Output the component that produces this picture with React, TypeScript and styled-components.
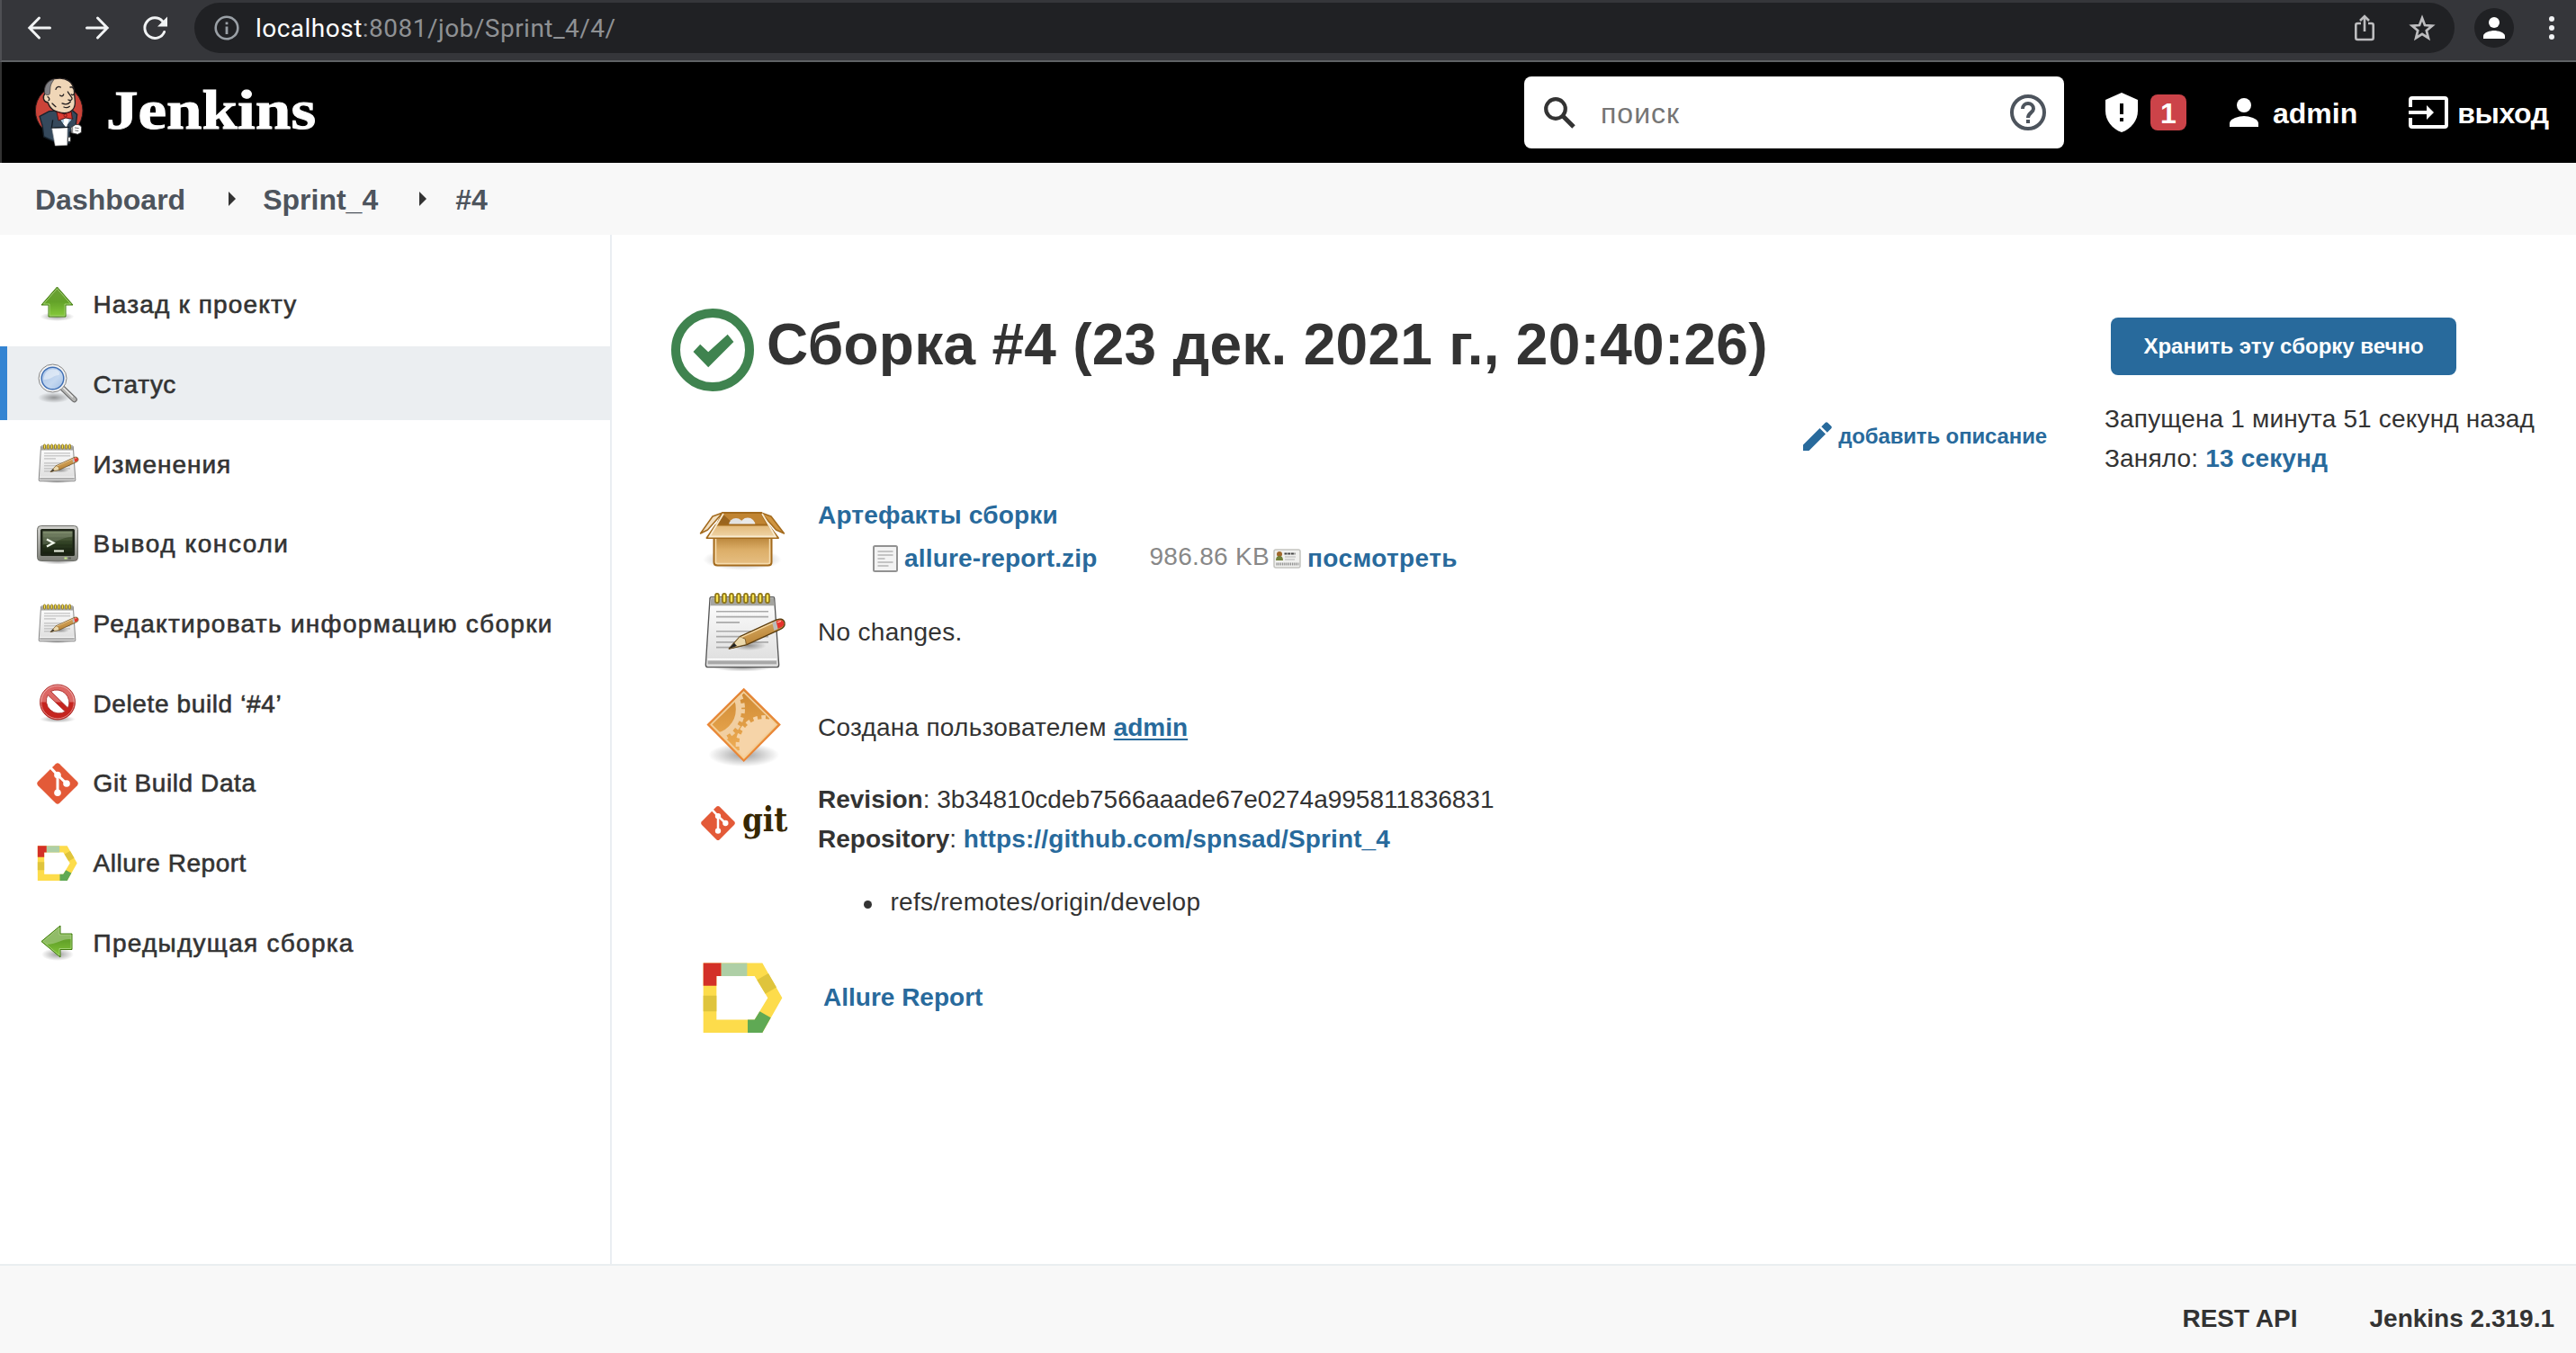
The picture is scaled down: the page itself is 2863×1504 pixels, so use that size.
import React from "react";
import styled, { createGlobalStyle } from "styled-components";

const GlobalStyle = createGlobalStyle`
  *, *::before, *::after { box-sizing: border-box; }
  body {
    margin: 0;
    background: #fff;
    color: #333;
    font-family: "Liberation Sans", Arial, sans-serif;
    font-size: 28px;
  }
  svg { display: block; flex: none; overflow: visible; }
`;

const Page = styled.div`
  display: flex;
  flex-direction: column;
  width: 2863px;
  height: 1504px;
  overflow: hidden;
  white-space: nowrap;
`;

/* ---------- browser toolbar ---------- */

const Toolbar = styled.div`
  display: flex;
  align-items: flex-start;
  height: 69px;
  background: #35363a;
  border-bottom: 2px solid #5f6164;
  border-left: 2px solid #4e4f53;
`;

const NavButtons = styled.div`
  display: flex;
  align-items: center;
  gap: 38px;
  height: 62px;
  padding-left: 29px;
  width: 214px;
`;

const AddressBar = styled.div`
  display: flex;
  align-items: center;
  width: 2512px;
  height: 56px;
  margin-top: 3px;
  padding: 0 21px 0 22px;
  border-radius: 28px;
  background: #202124;
`;

const Url = styled.div`
  flex: 1;
  margin-left: 18px;
  font-family: Roboto, sans-serif;
  font-size: 28px;
  line-height: 57px;
  letter-spacing: 0.48px;
  color: #8f9194;
  span { color: #fff; }
`;

const AddressActions = styled.div`
  display: flex;
  align-items: center;
  gap: 38px;
`;

const Avatar = styled.div`
  display: flex;
  align-items: center;
  justify-content: center;
  width: 44px;
  height: 44px;
  margin: 9px 0 0 22px;
  border-radius: 50%;
  background: #202124;
`;

const MenuDots = styled.div`
  display: flex;
  flex-direction: column;
  gap: 4px;
  margin: 18px 0 0 39px;
  i { width: 6px; height: 6px; border-radius: 50%; background: #f1f3f4; }
`;

/* ---------- Jenkins header ---------- */

const Header = styled.header`
  display: flex;
  align-items: center;
  height: 112px;
  padding-left: 36px;
  background: #000;
  border-left: 2px solid #333;
  color: #fff;
`;

const Brand = styled.div`
  display: flex;
  align-items: center;
  width: 1656px;
`;

const BrandName = styled.div`
  margin-left: 25px;
  padding-bottom: 5px;
  font-family: "Liberation Serif", serif;
  font-weight: 700;
  font-size: 61px;
  line-height: 80px;
  -webkit-text-stroke: 1px #fff;
  transform: scaleX(1.165);
  transform-origin: left center;
`;

const SearchBox = styled.div`
  display: flex;
  align-items: center;
  width: 600px;
  height: 80px;
  padding: 0 20px 0 22px;
  border-radius: 8px;
  background: #fff;
`;

const Placeholder = styled.span`
  flex: 1;
  padding: 2px 0 0 28px;
  font-size: 32px;
  letter-spacing: 1px;
  color: #757575;
`;

const HeaderLink = styled.div<{ $left: number; $gap: number; $ls?: number }>`
  display: flex;
  align-items: center;
  gap: ${(p) => p.$gap}px;
  margin-left: ${(p) => p.$left}px;
  font-weight: 700;
  font-size: 32px;
  line-height: 40px;
  letter-spacing: ${(p) => p.$ls ?? 0}px;
  span { padding-top: 2px; }
`;

const Badge = styled.div`
  width: 40px;
  height: 40px;
  border-radius: 8px;
  background: #cc4349;
  text-align: center;
  line-height: 42px;
`;

/* ---------- breadcrumbs ---------- */

const Breadcrumbs = styled.nav`
  display: flex;
  align-items: center;
  height: 80px;
  padding-left: 39px;
  background: #f8f8f8;
  color: #4d545d;
  font-weight: 700;
  font-size: 32px;
  line-height: 40px;
  span { padding-top: 2px; }
`;

const Separator = styled.i<{ $before: number; $after: number }>`
  margin: 0 ${(p) => p.$after}px 0 ${(p) => p.$before}px;
  border: 8px solid transparent;
  border-left-color: #333;
  border-right-width: 0;
`;

/* ---------- body ---------- */

const Body = styled.div`
  display: flex;
  height: 1144px;
`;

const Sidebar = styled.aside`
  display: flex;
  flex-direction: column;
  gap: 6.7px;
  width: 680px;
  padding-top: 35.3px;
  border-right: 2px solid #eaeef2;
`;

const Task = styled.a<{ $active?: boolean; $ls?: number }>`
  display: flex;
  align-items: center;
  height: 82px;
  padding-left: ${(p) => (p.$active ? 32 : 40)}px;
  border-left: ${(p) => (p.$active ? "8px solid #3484d2" : "none")};
  background: ${(p) => (p.$active ? "#ebeef1" : "transparent")};
  letter-spacing: ${(p) => p.$ls ?? 0}px;
  -webkit-text-stroke: 0.6px #333;
  svg { margin: 3px 15.5px 0 0; }
  span { padding-top: 4px; }
`;

const Main = styled.main`
  width: 1659px;
  padding-left: 66px;
`;

const Title = styled.h1`
  display: flex;
  align-items: center;
  height: 92px;
  margin: 82px 0 0;
  font-size: 64px;
  line-height: 80px;
  font-weight: 700;
  letter-spacing: 0.27px;
  span { margin: -12px 0 0 14px; }
`;

const AddDescription = styled.div`
  display: flex;
  align-items: center;
  justify-content: flex-end;
  gap: 7px;
  height: 40px;
  margin-top: 30px;
  padding-right: 64px;
  color: #286a9c;
  font-size: 24px;
  font-weight: 700;
  letter-spacing: -0.14px;
`;

const Summary = styled.div`
  display: flex;
  flex-direction: column;
  padding: 55px 0 0 32px;
`;

const SummaryRow = styled.div<{ $height: number; $text?: number }>`
  display: grid;
  grid-template-columns: 96px 1fr;
  column-gap: 35px;
  height: ${(p) => p.$height}px;
  line-height: 44px;
  > div:last-child { padding-top: ${(p) => p.$text ?? 0}px; }
`;

const Link = styled.a<{ $underline?: boolean; $ls?: number }>`
  color: #286a9c;
  font-weight: 700;
  letter-spacing: ${(p) => p.$ls ?? 0}px;
  text-decoration: ${(p) => (p.$underline ? "underline" : "none")};
  text-decoration-thickness: 2px;
  text-underline-offset: 3px;
`;

const Spaced = styled.span<{ $ls: number }>`
  letter-spacing: ${(p) => p.$ls}px;
`;

const Artifacts = styled.div`
  margin-top: -9px;
`;

const ArtifactLine = styled.div`
  display: flex;
  align-items: center;
  height: 48px;
  margin-top: 2px;
  padding-left: 61px;
`;

const FileSize = styled.span`
  margin: -4px 4px 0 58px;
  color: #888;
  letter-spacing: 0.3px;
`;

const Indented = styled.div<{ $left: number }>`
  margin-left: ${(p) => p.$left}px;
`;

const Refs = styled.ul`
  display: flex;
  align-items: center;
  gap: 20.5px;
  margin: 26px 0 0;
  padding: 0 0 0 51px;
  list-style: none;
  letter-spacing: 0.26px;
  &::before { content: ""; width: 9px; height: 9px; margin-top: 4px; border-radius: 50%; background: #333; }
`;

const GitLogo = styled.div`
  display: flex;
  align-items: center;
  height: 96px;
  gap: 7px;
`;

const GitWord = styled.span`
  margin-top: -9px;
  font-family: "DejaVu Serif", serif;
  font-weight: 700;
  font-size: 38px;
  color: #362701;
  transform: scaleX(0.86);
  transform-origin: left center;
`;

const BuildInfo = styled.section`
  width: 524px;
  padding-top: 92px;
`;

const KeepButton = styled.button`
  display: block;
  width: 384px;
  height: 64px;
  margin: 0 0 27px 7px;
  padding: 0 0 1px;
  border: 0;
  border-radius: 8px;
  background: #286a9c;
  color: #fff;
  font: 700 24px "Liberation Sans", Arial, sans-serif;
`;

const InfoLine = styled.div`
  line-height: 44px;
  letter-spacing: 0.17px;
`;

const Footer = styled.footer`
  display: flex;
  justify-content: flex-end;
  gap: 80px;
  height: 99px;
  padding: 21px 24px 0 0;
  border-top: 2px solid #eaeef0;
  background: #f8f8f8;
  font-weight: 700;
  line-height: 76px;
`;

/* ---------- icons ---------- */

const BackIcon = () => (
  <svg width="26" height="26" viewBox="0 0 26 26" fill="none" stroke="#f1f3f4" strokeWidth="3" strokeLinecap="round">
    <path d="M24.5 13H2M12.5 2 1.8 13l10.7 11" />
  </svg>
);
const ForwardIcon = () => (
  <svg width="26" height="26" viewBox="0 0 26 26" fill="none" stroke="#f1f3f4" strokeWidth="3" strokeLinecap="round">
    <path d="M1.5 13H24M13.5 2l10.7 11-10.7 11" />
  </svg>
);
const ReloadIcon = () => (
  <svg width="27" height="27" viewBox="0 0 27 27" fill="none">
    <path d="M23.6 17.5A11.3 11.3 0 1 1 21.5 5.5" stroke="#f1f3f4" strokeWidth="3" strokeLinecap="round" />
    <path d="M27 .5v11H16z" fill="#f1f3f4" />
  </svg>
);
const InfoIcon = () => (
  <svg width="28" height="28" viewBox="0 0 28 28">
    <circle cx="14" cy="14" r="12.3" fill="none" stroke="#9aa0a6" strokeWidth="2.6" />
    <path d="M12.6 12.5h2.8V21h-2.8zM12.6 7.5h2.8v2.8h-2.8z" fill="#9aa0a6" />
  </svg>
);
const ShareIcon = () => (
  <svg width="22" height="30" viewBox="0 0 22 30" fill="none" stroke="#bdbdbf" strokeWidth="2.6">
    <path d="M7 10H3.3a2 2 0 0 0-2 2v14a2 2 0 0 0 2 2h15.4a2 2 0 0 0 2-2V12a2 2 0 0 0-2-2H15M11 19V2.500M6 7l5-5 5 5" />
  </svg>
);
const StarIcon = () => (
  <svg width="30" height="30" viewBox="0 0 30 30" fill="none" stroke="#bdbdbf" strokeWidth="2.7">
    <path d="m15 4 3 8 8.200.6-6.400 5.300 2.100 8.300-6.900-4.400-6.900 4.400 2.100-8.300L3.800 12.600 12 12z" />
  </svg>
);
const PersonIcon = ({ size, color = "#fff" }: { size: number; color?: string }) => (
  <svg width={size} height={size} viewBox="0 0 32 32" fill={color}>
    <circle cx="16" cy="8" r="8" />
    <path d="M0 32v-4c0-5.300 10.700-8 16-8s16 2.700 16 8v4z" />
  </svg>
);

const Mascot = () => (
  <svg width="55" height="77.300" viewBox="115 258 165 232">
    <ellipse cx="198" cy="369" rx="79" ry="83" fill="#cb4339" stroke="#2a1a1a" strokeWidth="3" />
    <path d="m133 388 32-17 75-5 18 16-5 42-20 18v35h-40l-46-21-4-34z" fill="#35495c" stroke="#16212b" strokeWidth="4" />
    <path d="M151 312c-6-31 15-49 40-50 32-4 53 11 57 39l3 36c2 22-9 39-35 40-29-1-49-14-55-35-15-2-20-18-10-30z" fill="#f0d6b7" stroke="#241f20" strokeWidth="4" />
    <path d="M150 312c-4-25 11-44 31-47-6 10-10 14-12 25l-2 23c-2 5-12 6-17-1z" fill="#808084" stroke="#3a3536" strokeWidth="2" />
    <path d="M187 298c2-8 10-11 16-7M235 291c6-2 9 1 11 5M201 318c5 4 10 3 12-3M239 315c4 3 7 2 9-2M227 306c6 12 20 22 12 27-4 2-7 2-10 0M208 345c12 5 22 2 28-6M214 357c8 4 14 2 19-2M163 335c5-2 2-10-3-12M175 345l12 11" fill="none" stroke="#241f20" strokeWidth="4" strokeLinecap="round" />
    <path d="m197 395 22 30 26-30-25-6z" fill="#abc9dd" stroke="#203040" strokeWidth="3" />
    <path d="m216 393-4 20 11 12 8-27z" fill="#fff" />
    <path d="m190 373 25 7 24-7 3 24-22-4-24 9z" fill="#dc3b32" stroke="#511" strokeWidth="3" />
    <circle cx="219" cy="385" r="5" fill="#dc3b32" stroke="#511" strokeWidth="2" />
    <path d="M174 425c16 3 35 3 52-1l-1 60-40 2z" fill="#fff" stroke="#bbb" strokeWidth="2" />
    <path d="M177 400l-4 26 60-2" fill="none" stroke="#101b24" strokeWidth="4" />
    <path d="M238 425l14-9c10-2 19 1 21 9l-1 17-12 6-21-5zM228 457h8v15h-9z" fill="#fff" stroke="#333" strokeWidth="2.500" />
    <path d="M250 426l14 2M251 435l12 2M243 423v20" stroke="#555" strokeWidth="2.500" />
  </svg>
);

const SearchIcon = () => (
  <svg width="35" height="35" viewBox="0 0 35 35" fill="none" stroke="#333">
    <circle cx="13" cy="13" r="10.800" strokeWidth="4.200" />
    <path d="m21 21 12 12" strokeWidth="5" />
  </svg>
);
const HelpIcon = () => (
  <svg width="40" height="40" viewBox="0 0 40 40" fill="none" stroke="#4d545d" strokeWidth="4">
    <circle cx="20" cy="20" r="18" />
    <path d="M14 16a6 6 0 1 1 12 0c0 4-6 4.500-6 10" />
    <path d="M20 28v4" />
  </svg>
);
const ShieldIcon = () => (
  <svg width="36" height="44" viewBox="0 0 36 44">
    <path d="M18 0l18 8v12c0 11-7.500 20.500-18 24C7.500 40.500 0 31 0 20V8z" fill="#fff" />
    <path d="M16 12h4v12h-4zM16 28h4v4h-4z" fill="#000" />
  </svg>
);
const LogoutIcon = () => (
  <svg width="44" height="36" viewBox="0 0 44 36" fill="#fff">
    <path d="M2 12V4a2 2 0 0 1 2-2h36a2 2 0 0 1 2 2v28a2 2 0 0 1-2 2H4a2 2 0 0 1-2-2v-8" fill="none" stroke="#fff" strokeWidth="4" />
    <path d="M0 16h20v-6l8 8-8 8v-6H0z" />
  </svg>
);

const ArrowUpIcon = () => (
  <svg width="48" height="48" viewBox="0 0 48 48">
    <defs>
      <linearGradient id="green" x1="0" y1="0" x2="0" y2="1">
        <stop offset="0" stopColor="#6c9f38" /><stop offset=".5" stopColor="#64a329" /><stop offset="1" stopColor="#86ca3b" />
      </linearGradient>
      <radialGradient id="shade"><stop offset="0" stopColor="#000" stopOpacity=".38" /><stop offset="1" stopColor="#000" stopOpacity="0" /></radialGradient>
    </defs>
    <ellipse cx="23.500" cy="37" rx="19" ry="5" fill="url(#shade)" />
    <path d="M23.500 4 41 24h-8v13H14V24H6z" fill="url(#green)" stroke="#3f7a0c" strokeLinejoin="round" />
    <path d="M23.500 5.800 38.600 23H32v13H15V23H8.400z" fill="none" stroke="#b5dc8b" strokeOpacity=".7" />
  </svg>
);
const ArrowLeftIcon = () => (
  <svg width="48" height="48" viewBox="0 0 48 48">
    <ellipse cx="24" cy="37" rx="18" ry="7" fill="url(#shade)" />
    <path d="M6 22.500 27 5v9h13v17.500H27V40z" fill="url(#green)" stroke="#3f7a0c" strokeLinejoin="round" />
    <path d="M7.600 22.500 26 7v8h13v5c-10-1-14 5-27 6z" fill="#fff" fillOpacity=".28" />
    <path d="M7.600 22.500 26 7v8h13v15.500H26V38z" fill="none" stroke="#b5dc8b" strokeOpacity=".7" />
  </svg>
);
const MagnifierIcon = () => (
  <svg width="48" height="48" viewBox="0 0 48 48">
    <defs>
      <linearGradient id="lens" x1="0" y1="0" x2="1" y2="1"><stop offset="0" stopColor="#a9c3e6" /><stop offset=".6" stopColor="#c5d8f0" /><stop offset="1" stopColor="#9fbde4" /></linearGradient>
    </defs>
    <ellipse cx="20" cy="39" rx="18" ry="6" fill="url(#shade)" />
    <path d="m29 28 13.500 13" stroke="#666" strokeWidth="6.500" strokeLinecap="round" />
    <path d="m29 28 13.500 13" stroke="#b4b4b2" strokeWidth="4.500" strokeLinecap="round" />
    <path d="m30 27.500 11 11" stroke="#eee" strokeWidth="1.200" />
    <circle cx="18.500" cy="17.500" r="15.500" fill="#f4f4f4" stroke="#858585" />
    <circle cx="18.500" cy="17.500" r="12.300" fill="url(#lens)" stroke="#3f6fb5" strokeWidth="1.500" />
    <path d="M8.500 19c1-9 6-13 14-11 4 2 4 4 3 6-6 0-8 5-17 5z" fill="#fff" fillOpacity=".45" />
  </svg>
);
const NotepadIcon = ({ size }: { size: number }) => (
  <svg width={size} height={size} viewBox="84 47 288 279" preserveAspectRatio="none">
    <defs>
      <linearGradient id="paper" x1="0" y1="0" x2="0" y2="1"><stop offset="0" stopColor="#fff" /><stop offset="1" stopColor="#dcdcdc" /></linearGradient>
      <linearGradient id="wood" x1="0" y1="0" x2=".5" y2="1"><stop offset="0" stopColor="#e6bd78" /><stop offset="1" stopColor="#b27a2b" /></linearGradient>
    </defs>
    <ellipse cx="226" cy="297" rx="100" ry="13" fill="url(#shade)" />
    <path d="M122 69h206q4 0 4 4l15 215q0 8-7 8H110q-7 0-7-8l14-213q0-6 5-6z" fill="url(#paper)" stroke="#555" strokeWidth="4" />
    <path d="M121 72h209l2 25H118z" fill="#a5a5a0" />
    <path d="M110 275h229v11H110z" fill="#a8a8a8" />
    <path d="M109 270h231" stroke="#fff" strokeWidth="4" />
    <path d="M138 116h174M138 133h174M138 151h78M138 180h174M138 197h174M138 215h174M138 232h60" stroke="#aaa" strokeWidth="5" />
    <ellipse cx="245" cy="226" rx="60" ry="16" fill="url(#shade)" />
    {[141, 165, 189, 213, 237, 261, 285, 309].map((x) => (
      <rect key={x} x={x - 6} y="58" width="12" height="30" rx="6" fill="#f7e251" stroke="#8d7416" strokeWidth="5" />
    ))}
    <path d="m181 236 36-39 117-52c14-8 29-6 32 7 2 12-5 18-15 22L240 223z" fill="url(#wood)" stroke="#5a3d10" strokeWidth="4" strokeLinejoin="round" />
    <path d="m181 236 36-39 18 8 3 18z" fill="#ecd9ac" stroke="#5a3d10" strokeWidth="2" />
    <path d="m181 236 17-18 9 9z" fill="#222" />
    <path d="m222 199 105-46" stroke="#f6d9a4" strokeWidth="4" />
    <path d="m325 152 13-6 6 26-13 6z" fill="#bcbcbc" />
    <path d="m338 147c14-6 24-3 26 7 0 9-6 13-20 17z" fill="#e7322d" />
    <path d="m342 151 12-4" stroke="#ffb0a0" strokeWidth="4" />
  </svg>
);
const TerminalIcon = () => (
  <svg width="48" height="48" viewBox="0 0 48 48">
    <defs>
      <linearGradient id="screen" x1="0" y1="0" x2="0" y2="1"><stop offset="0" stopColor="#6b7b56" /><stop offset=".55" stopColor="#2f3f22" /><stop offset="1" stopColor="#172010" /></linearGradient>
      <linearGradient id="shell" x1="0" y1="0" x2="0" y2="1"><stop offset="0" stopColor="#cfcfcb" /><stop offset="1" stopColor="#7d7f78" /></linearGradient>
    </defs>
    <ellipse cx="24" cy="43" rx="20" ry="3.500" fill="url(#shade)" />
    <rect x="1.500" y="3.500" width="45" height="39" rx="4" fill="url(#shell)" stroke="#6d6e69" />
    <rect x="5" y="7" width="38" height="30" rx="1.500" fill="#1d2417" />
    <rect x="7.500" y="9.500" width="33" height="25" fill="url(#screen)" />
    <path d="M8 13h32M8 17h32M8 21h32M8 25h32M8 29h32" stroke="#000" strokeOpacity=".14" />
    <path d="M7.500 9.500h33v6c-14 1-18 8-33 9z" fill="#fff" fillOpacity=".14" />
    <path d="m12 18.500 7.500 4-7.500 4" fill="none" stroke="#f0f6ea" strokeWidth="2.300" />
    <path d="M20 31.500h11" stroke="#e2e8da" strokeWidth="2.200" />
    <path d="M31.500 39.500h3" stroke="#c9ee86" strokeWidth="2" />
    <path d="M36 39.500h3" stroke="#5d5f57" strokeWidth="2" />
  </svg>
);
const DeleteIcon = () => (
  <svg width="48" height="48" viewBox="0 0 48 48" fill="none">
    <defs>
      <linearGradient id="ban" x1="0" y1="0" x2="0" y2="1"><stop offset="0" stopColor="#dd6462" /><stop offset=".48" stopColor="#dc6a66" /><stop offset=".52" stopColor="#c5241f" /><stop offset="1" stopColor="#c5241f" /></linearGradient>
    </defs>
    <ellipse cx="24" cy="41.500" rx="20" ry="4" fill="url(#shade)" />
    <path fillRule="evenodd" d="M24 3a19.500 19.500 0 1 0 0 39 19.500 19.500 0 0 0 0-39zm-11 11.500 19.500 18.500A14 14 0 0 1 13 14.500zm3.500-4A14 14 0 0 1 35.500 29z" fill="url(#ban)" stroke="#a5201c" strokeWidth=".8" />
    <circle cx="24" cy="22.500" r="18.300" stroke="#fff" strokeOpacity=".45" />
  </svg>
);
const GitIcon = ({ size }: { size: number }) => (
  <svg width={size} height={size} viewBox="0 0 48 48">
    <path d="M21.800 2.200q2.200-2 4.400 0l19.600 19.600q2 2.200 0 4.400L26.200 45.800q-2.200 2-4.400 0L2.200 26.200q-2-2.200 0-4.400z" fill="#e35a38" />
    <path d="M15 5 24 14.500v19.500M24 14.500l10 9.500" fill="none" stroke="#fff" strokeWidth="3" />
    <circle cx="24" cy="14.500" r="3.800" fill="#fff" />
    <circle cx="34" cy="24" r="3.800" fill="#fff" />
    <circle cx="24" cy="34.300" r="3.800" fill="#fff" />
  </svg>
);
const AllureIcon = ({ size }: { size: number }) => (
  <svg width={size} height={size} viewBox="84 1224 288 279" preserveAspectRatio="none">
    <path fillRule="evenodd" d="M95 1249h197l66 112-66 113H95zM139 1291v141h127l44-71-44-70z" fill="#fddc4b" />
    <path d="M95 1249h60v42h-16v31H95z" fill="#d33027" />
    <path d="M155 1249h86v42h-86z" fill="#aecfa6" />
    <path d="M95 1354h44v51H95zM274 1303l38-21 27 45-37 21z" fill="#dfc43c" />
    <path d="M243 1432h23l17-27 37 20-28 49h-49z" fill="#5fa954" />
  </svg>
);
const SuccessIcon = () => (
  <svg width="92" height="92" viewBox="0 0 92 92" fill="#3f834f">
    <circle cx="46" cy="46" r="41" fill="none" stroke="#3f834f" strokeWidth="10" />
    <path d="m24.500 48 7.700-8.300 9 8.600 21.500-19.600 6.700 8.300L41.200 65.300z" />
  </svg>
);
const PencilIcon = () => (
  <svg width="32" height="32" viewBox="0 0 32 32" fill="#286a9c">
    <path d="M0 25.500 18.500 7 25 13.500 6.500 32H0zM20.300 5.200l4.500-4.500q1.200-1 2.400 0l4.100 4.100q1 1.200 0 2.400l-4.500 4.500z" />
  </svg>
);
const PackageIcon = () => (
  <svg width="96" height="96" viewBox="0 0 96 96">
    <defs>
      <linearGradient id="carton" x1="0" y1="0" x2="0" y2="1"><stop offset="0" stopColor="#b98439" /><stop offset=".45" stopColor="#dcae68" /><stop offset="1" stopColor="#e7c084" /></linearGradient>
      <linearGradient id="flap" x1="0" y1="0" x2="0" y2="1"><stop offset="0" stopColor="#e2b878" /><stop offset="1" stopColor="#f1d7aa" /></linearGradient>
    </defs>
    <ellipse cx="47" cy="62" rx="44" ry="12" fill="url(#shade)" />
    <path d="M25 10 14 14 .5 33l8-4L19 17z" fill="#f2dfc0" stroke="#a36a1d" strokeWidth="1.500" strokeLinejoin="round" />
    <path d="M68 10l11 4 14.500 19-9-4L74 17z" fill="#cf9440" stroke="#a36a1d" strokeWidth="1.500" strokeLinejoin="round" />
    <path d="M25 10h43l8 15H18z" fill="#c08432" stroke="#a36a1d" strokeWidth="2" />
    <path d="m26 12-6 11h18z" fill="#9a641d" />
    <circle cx="40" cy="24" r="8" fill="#e2e2e2" /><circle cx="53" cy="24" r="8.500" fill="#e9e9e9" />
    <path d="M15.500 37h64v28q0 3.500-4 3.500h-56q-4 0-4-3.500z" fill="url(#carton)" stroke="#a36a1d" strokeWidth="2" />
    <path d="M17.500 39v26q0 1.500 2 1.500h56q2 0 2-1.500V39" fill="none" stroke="#f5dcae" strokeWidth="1.500" />
    <path d="M17.500 23.500h58.500l11 14.500H7.500z" fill="url(#flap)" stroke="#a36a1d" strokeWidth="2" strokeLinejoin="round" />
    <path d="M26 11 10.500 36.500h73.500L69 11" fill="none" stroke="#f9ebd0" strokeWidth="1.800" />
  </svg>
);
const UserCauseIcon = () => (
  <svg width="96" height="96" viewBox="84 348 288 279" preserveAspectRatio="none">
    <defs>
      <linearGradient id="amber" x1="0" y1="0" x2="0" y2="1"><stop offset="0" stopColor="#cd8832" /><stop offset="1" stopColor="#f4b35a" /></linearGradient>
      <clipPath id="tile"><path d="M230 372 341 480 230 590 118 480z" /></clipPath>
    </defs>
    <ellipse cx="230" cy="578" rx="118" ry="38" fill="url(#shade)" />
    <path d="M230 365 350 480 230 597 110 480z" fill="url(#amber)" stroke="#ea8435" strokeWidth="5" />
    <g clipPath="url(#tile)">
      <circle cx="125" cy="430" r="88" fill="none" stroke="#f1cfa1" strokeWidth="19" />
      <circle cx="125" cy="430" r="102" fill="none" stroke="#f1cfa1" strokeWidth="14" strokeDasharray="14 13" />
      <circle cx="298" cy="545" r="84" fill="#f6d4a8" />
      <circle cx="298" cy="545" r="88" fill="none" stroke="#f6d4a8" strokeWidth="14" strokeDasharray="14 13" />
    </g>
    <path d="M230 375 339 480 230 587 121 480z" fill="none" stroke="#f5cf9c" strokeWidth="5" />
  </svg>
);
const FileIcon = () => (
  <svg width="28" height="30" viewBox="0 0 28 30">
    <rect x="1" y="1" width="26" height="28" rx="1.500" fill="#f3f3f3" stroke="#929292" strokeWidth="2" />
    <path d="M5.500 7h17M5.500 11h17M5.500 15h8M5.500 19h17M5.500 23h12" stroke="#c4c4c4" strokeWidth="2" />
  </svg>
);
const FingerprintIcon = () => (
  <svg width="31" height="24" viewBox="0 0 31 24">
    <rect x="1" y="2" width="29" height="20" rx="2" fill="#f0f0ee" stroke="#c4c4c0" strokeWidth="1.500" />
    <circle cx="7" cy="7" r="3" fill="#a0682b" />
    <path d="M3 14q0-5 4-5t4 5z" fill="#71813a" />
    <path d="M12.500 6.500h12" stroke="#444" strokeWidth="1.800" strokeDasharray="3 .7" />
    <path d="M13 10h12M13 13h11" stroke="#c8c8c8" strokeWidth="1.500" />
    <path d="M3.500 18h25" stroke="#888" strokeWidth="3" strokeDasharray="1.200 1" />
  </svg>
);

const tasks: { label: string; icon: React.ReactNode; active?: boolean; ls?: number }[] = [
  { label: "Назад к проекту", icon: <ArrowUpIcon />, ls: 1.15 },
  { label: "Статус", icon: <MagnifierIcon />, active: true, ls: 0.65 },
  { label: "Изменения", icon: <NotepadIcon size={48} />, ls: 0.95 },
  { label: "Вывод консоли", icon: <TerminalIcon />, ls: 1.6 },
  { label: "Редактировать информацию сборки", icon: <NotepadIcon size={48} />, ls: 1.3 },
  { label: "Delete build ‘#4’", icon: <DeleteIcon />, ls: 0.62 },
  { label: "Git Build Data", icon: <GitIcon size={48} />, ls: 0.6 },
  { label: "Allure Report", icon: <AllureIcon size={48} />, ls: 0.54 },
  { label: "Предыдущая сборка", icon: <ArrowLeftIcon />, ls: 1.27 },
];

export default function App() {
  return (
    <Page>
      <GlobalStyle />
      <Toolbar>
        <NavButtons><BackIcon /><ForwardIcon /><ReloadIcon /></NavButtons>
        <AddressBar>
          <InfoIcon />
          <Url><span>localhost</span>:8081/job/Sprint_4/4/</Url>
          <AddressActions><ShareIcon /><StarIcon /></AddressActions>
        </AddressBar>
        <Avatar><PersonIcon size={24} /></Avatar>
        <MenuDots><i /><i /><i /></MenuDots>
      </Toolbar>
      <Header>
        <Brand><Mascot /><BrandName>Jenkins</BrandName></Brand>
        <SearchBox><SearchIcon /><Placeholder>поиск</Placeholder><HelpIcon /></SearchBox>
        <HeaderLink $left={46} $gap={14}><ShieldIcon /><Badge>1</Badge></HeaderLink>
        <HeaderLink $left={48} $gap={16}><PersonIcon size={32} /><span>admin</span></HeaderLink>
        <HeaderLink $left={57} $gap={10} $ls={-0.4}><LogoutIcon /><span>выход</span></HeaderLink>
      </Header>
      <Breadcrumbs>
        <span>Dashboard</span><Separator $before={48} $after={30} />
        <span>Sprint_4</span><Separator $before={46} $after={32} />
        <span>#4</span>
      </Breadcrumbs>
      <Body>
        <Sidebar>
          {tasks.map((t) => (
            <Task key={t.label} $active={t.active} $ls={t.ls}>{t.icon}<span>{t.label}</span></Task>
          ))}
        </Sidebar>
        <Main>
          <Title><SuccessIcon /><span>Сборка #4 (23 дек. 2021 г., 20:40:26)</span></Title>
          <AddDescription><PencilIcon /><span>добавить описание</span></AddDescription>
          <Summary>
            <SummaryRow $height={96}>
              <PackageIcon />
              <Artifacts>
                <Link $ls={0.2}>Артефакты сборки</Link>
                <ArtifactLine>
                  <FileIcon />
                  <Indented $left={7}><Link $ls={0.17}>allure-report.zip</Link></Indented>
                  <FileSize>986.86 KB</FileSize>
                  <FingerprintIcon />
                  <Indented $left={7}><Link $ls={0.4}>посмотреть</Link></Indented>
                </ArtifactLine>
              </Artifacts>
            </SummaryRow>
            <SummaryRow $height={104} $text={25}>
              <NotepadIcon size={96} /><div><Spaced $ls={0.3}>No changes.</Spaced></div>
            </SummaryRow>
            <SummaryRow $height={107} $text={27}>
              <UserCauseIcon />
              <div><Spaced $ls={0.25}>Создана пользователем </Spaced><Link $underline>admin</Link></div>
            </SummaryRow>
            <SummaryRow $height={195}>
              <GitLogo><GitIcon size={40} /><GitWord>git</GitWord></GitLogo>
              <div>
                <div><b>Revision</b>: 3b34810cdeb7566aaade67e0274a995811836831</div>
                <div><b>Repository</b>: <Link $ls={0.13}>https://github.com/spnsad/Sprint_4</Link></div>
                <Refs><li>refs/remotes/origin/develop</li></Refs>
              </div>
            </SummaryRow>
            <SummaryRow $height={96} $text={25}>
              <AllureIcon size={96} /><Indented $left={6}><Link>Allure Report</Link></Indented>
            </SummaryRow>
          </Summary>
        </Main>
        <BuildInfo>
          <KeepButton>Хранить эту сборку вечно</KeepButton>
          <InfoLine>Запущена 1 минута 51 секунд назад</InfoLine>
          <InfoLine>Заняло: <Link $ls={0.17}>13 секунд</Link></InfoLine>
        </BuildInfo>
      </Body>
      <Footer><span>REST API</span><span>Jenkins 2.319.1</span></Footer>
    </Page>
  );
}
